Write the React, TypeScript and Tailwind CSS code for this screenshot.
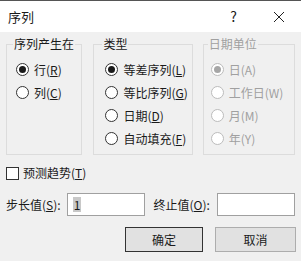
import React from 'react';

const font = { fontFamily: '"Noto Sans CJK SC", "Noto Sans", sans-serif' };

interface RadioProps {
  label: React.ReactNode;
  checked?: boolean;
  disabled?: boolean;
}

const Radio: React.FC<RadioProps> = ({ label, checked, disabled }) => (
  <div className="flex items-center h-[23px] whitespace-nowrap">
    <span
      className={`w-[13px] h-[13px] rounded-full border flex items-center justify-center bg-white shrink-0 ${
        disabled ? 'border-[#bcbcbc]' : 'border-[#333]'
      }`}
    >
      {checked && (
        <span className={`w-[7px] h-[7px] rounded-full ${disabled ? 'bg-[#a6a6a6]' : 'bg-[#1a1a1a]'}`} />
      )}
    </span>
    <span className={`ml-[5px] text-[12px] leading-none ${disabled ? 'text-[#a0a0a0]' : 'text-[#1a1a1a]'}`}>
      {label}
    </span>
  </div>
);

const Group: React.FC<{ title: string; className: string; disabled?: boolean; children: React.ReactNode }> = ({
  title,
  className,
  disabled,
  children,
}) => (
  <fieldset className={`border border-[#dcdcdc] h-[118px] min-w-0 ${className}`}>
    <legend
      className={`-ml-[3px] px-[1px] text-[12px] leading-[14px] whitespace-nowrap ${
        disabled ? 'text-[#a0a0a0]' : 'text-[#1a1a1a]'
      }`}
    >
      {title}
    </legend>
    {children}
  </fieldset>
);

export default function App() {
  return (
    <div className="w-[301px] h-[261px] bg-[#f0f0f0] border-t border-[#555] overflow-hidden" style={font}>
      <div className="h-[31px] bg-white flex items-center px-[8px] text-[13px] text-[#1a1a1a]">
        <span>序列</span>
        <span className="ml-auto mr-[36px] text-[14px]">?</span>
        <svg width="12" height="12" viewBox="0 0 12 12" className="mr-[8px]">
          <path d="M1 1 L11 11 M11 1 L1 11" stroke="#222" strokeWidth="1" />
        </svg>
      </div>

      <div className="flex px-[6px] mt-[5px] gap-[10px]">
        <Group title="序列产生在" className="w-[77px] pl-[9px] pt-[7px]">
          <Radio checked label={<>行(<u>R</u>)</>} />
          <Radio label={<>列(<u>C</u>)</>} />
        </Group>
        <Group title="类型" className="w-[100px] pl-[11px] pt-[7px] ml-[1px]">
          <Radio checked label={<>等差序列(<u>L</u>)</>} />
          <Radio label={<>等比序列(<u>G</u>)</>} />
          <Radio label={<>日期(<u>D</u>)</>} />
          <Radio label={<>自动填充(<u>F</u>)</>} />
        </Group>
        <Group title="日期单位" disabled className="w-[93px] pl-[7px] pt-[7px]">
          <Radio checked disabled label="日(A)" />
          <Radio disabled label="工作日(W)" />
          <Radio disabled label="月(M)" />
          <Radio disabled label="年(Y)" />
        </Group>
      </div>

      <div className="flex items-center px-[6px] mt-[11px] h-[14px]">
        <span className="w-[13px] h-[13px] border border-[#333] bg-white" />
        <span className="ml-[4px] text-[12px] text-[#1a1a1a]">
          预测趋势(<u>T</u>)
        </span>
      </div>

      <div className="flex items-center px-[6px] mt-[13px] text-[12px] text-[#1a1a1a]">
        <span className="w-[61px]">
          步长值(<u>S</u>):
        </span>
        <div className="w-[78px] h-[23px] border border-[#a0a0a0] bg-white flex items-center pl-[5px]">
          <span className="bg-[#c8c8c8] px-[1px] leading-[15px]">1</span>
        </div>
        <span className="ml-[9px] w-[64px]">
          终止值(<u>O</u>):
        </span>
        <div className="w-[78px] h-[23px] border border-[#a0a0a0] bg-white" />
      </div>

      <div className="flex justify-end px-[5px] mt-[11px] gap-[12px] text-[12px] text-[#1a1a1a]">
        <button className="w-[78px] h-[25px] bg-[#e1e1e1] border border-[#333] outline outline-1 outline-[#e1e1e1] -outline-offset-2">
          确定
        </button>
        <button className="w-[81px] h-[25px] bg-[#e1e1e1] border border-[#adadad]">取消</button>
      </div>
    </div>
  );
}
